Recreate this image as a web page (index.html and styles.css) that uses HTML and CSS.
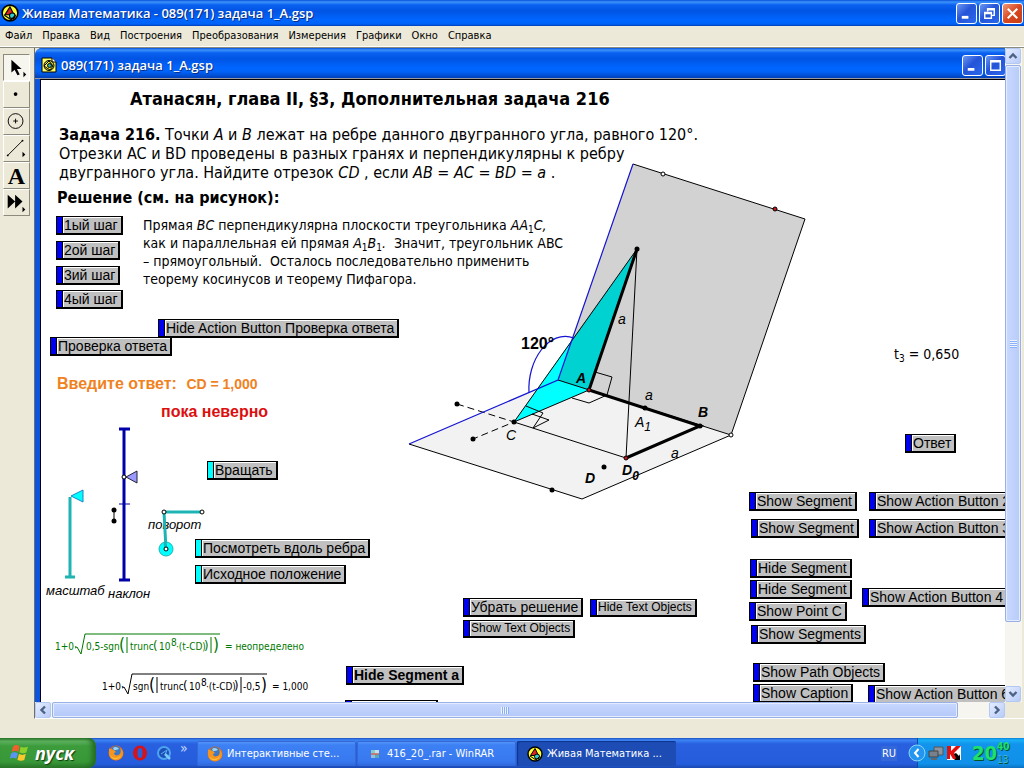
FILE: index.html
```
<!DOCTYPE html>
<html lang="ru">
<head>
    <meta charset="UTF-8">
    <title>Живая Математика - 089(171) задача 1_A.gsp</title>
    <link rel="stylesheet" href="styles.css">
</head>
<body>
<!-- общие значки -->
<svg class="defs" aria-hidden="true">
    <symbol id="logo" viewBox="0 0 16 16">
        <circle cx="8" cy="8" r="7" fill="#ff3" stroke="#000" stroke-width="1.4"/>
        <path d="M8 2.500L3.500 9.500h8z" fill="#d22" stroke="#000"/>
        <circle cx="10" cy="10.500" r="2.500" fill="#3cc" stroke="#000"/>
        <path d="M3 10l6 4 4-4" fill="none" stroke="#000"/>
    </symbol>
    <symbol id="firefox" viewBox="0 0 16 16">
        <circle cx="8" cy="8" r="7.5" fill="#e66a10"/>
        <circle cx="8" cy="6" r="5" fill="#3a78c8"/>
        <path d="M5 3c2-2 5-1 6 1L8 5 6 5z" fill="#9cd4f4"/>
        <path d="M1 2c0 2 1 2 2 2l3 1 2 2-2 1c0 3 4 3 6 1 1-2 1-4 0-6 4 3 4 8 0 11-5 3-11 0-11-6z" fill="#f5941e"/>
        <path d="M2 10c3 4 8 4 11 0-1 5-9 6-11 0z" fill="#fbc23a"/>
    </symbol>
    <symbol id="arrow" viewBox="0 0 10 10">
        <path d="M1.500 7L5 3.500 8.500 7" fill="none" stroke="#4d6185" stroke-width="2.400"/>
    </symbol>
</svg>

<div class="titlebar">
    <svg class="logo"><use href="#logo"/></svg>
    <h1>Живая Математика - 089(171) задача 1_A.gsp</h1>
    <button class="win" aria-label="Свернуть"><svg viewBox="0 0 20 20"><path d="M5 14h7" stroke="#fff" stroke-width="3"/></svg></button>
    <button class="win" aria-label="Восстановить"><svg viewBox="0 0 20 20"><path d="M8 8V5h7v7h-3M8 6h7" fill="none" stroke="#fff" stroke-width="1.500"/><path d="M5 9h7v6H5zM5 10h7" fill="none" stroke="#fff" stroke-width="1.500"/></svg></button>
    <button class="win close" aria-label="Закрыть"><svg viewBox="0 0 20 20"><path d="M5 5l10 10M15 5L5 15" stroke="#fff" stroke-width="2.200"/></svg></button>
</div>

<div class="menu">
    <button>Файл</button>
    <button>Правка</button>
    <button>Вид</button>
    <button>Построения</button>
    <button>Преобразования</button>
    <button>Измерения</button>
    <button>Графики</button>
    <button>Окно</button>
    <button>Справка</button>
</div>

<div class="work">
    <div class="tools">
        <button class="on" aria-label="Стрелка"><svg viewBox="0 0 27 27"><path d="M8 5v14l3.500-3 3 6 2.500-1-3-6h5z"/><path d="M21 18v6l3-3z"/></svg></button>
        <button aria-label="Точка"><svg viewBox="0 0 27 27"><circle cx="12.500" cy="13" r="2"/></svg></button>
        <button aria-label="Циркуль"><svg viewBox="0 0 27 27"><circle cx="12.500" cy="13" r="8" fill="none" stroke="#000"/><path d="M10 13h5M12.500 10.500v5" stroke="#000"/></svg></button>
        <button aria-label="Линейка"><svg viewBox="0 0 27 27"><path d="M4 21L20 5" stroke="#000"/><circle cx="4" cy="21" r="1"/><circle cx="20" cy="5" r="1"/><path d="M20 17v6l3-3z"/></svg></button>
        <button class="letter">A</button>
        <button aria-label="Инструменты"><svg viewBox="0 0 27 27"><path d="M4 5v15l8-7.500zM12 5v15l8-7.500z"/><path d="M20 18v6l3-3z"/></svg></button>
    </div>

    <div class="mdi">
        <div class="doc">
            <div class="dochead">
                <svg class="docicon" viewBox="0 0 16 16"><path d="M1 1h10l4 4v10H1z" fill="#ff6" stroke="#000"/><path d="M11 1v4h4" fill="#fff" stroke="#000"/><circle cx="8" cy="8.500" r="5" fill="#cc3" stroke="#000"/><path d="M3 9l5-5 4 5-3 4z" fill="#ff3" stroke="#000"/><circle cx="8.500" cy="8.500" r="2" fill="#3aa" stroke="#000"/></svg>
                <h2>089(171) задача 1_A.gsp</h2>
                <button class="win" aria-label="Свернуть"><svg viewBox="0 0 20 20"><path d="M5 14h7" stroke="#fff" stroke-width="3"/></svg></button>
                <button class="win" aria-label="Развернуть"><svg viewBox="0 0 20 20"><path d="M5 5h10v10H5zM5 6h10" fill="none" stroke="#fff" stroke-width="1.500"/></svg></button>
            </div>

            <div class="sketch">
                <!-- чертёж -->
                <svg class="figure" viewBox="41 80 964 622">
                    <path d="M558 380L731 435 582 499 409 444z" fill="#f2f2f2"/>
                    <path d="M633 164L805 219 731 435 558 380z" fill="#d2d2d2"/>
                    <path d="M572 340L514 422 589 390 558 380z" fill="#0ff"/>
                    <path d="M637 249L572 340 558 380 589 390z" fill="#00d2d2"/>
                    <g fill="none" stroke="#000">
                        <path d="M633 164L805 219 731 435 582 499 409 444M558 380L731 435"/>
                        <path d="M589 390L514 422 637 249 626 458 514 422"/>
                        <path d="M595 372l17 5-5 18-18 8-17-5"/>
                        <path d="M526 406l17 7-10 15M532 414l17 6-16 8"/>
                        <path d="M457 404l57 18-41 17" stroke-dasharray="7 4"/>
                        <path d="M637 249L589 390 700 426 626 458" stroke-width="3"/>
                    </g>
                    <g fill="none" stroke="#1414d2" stroke-width="1.200">
                        <path d="M633 164L558 380 409 444"/>
                        <path d="M529 393C527 360 549 329 574 338"/>
                    </g>
                    <circle cx="637" cy="249" r="2.500"/>
                    <circle cx="514" cy="422" r="2.500"/>
                    <circle cx="700" cy="426" r="2.500"/>
                    <circle cx="645" cy="408" r="2.500"/>
                    <circle cx="457" cy="404" r="2.500"/>
                    <circle cx="473" cy="439" r="2.500"/>
                    <circle cx="604" cy="467" r="2.500"/>
                    <circle cx="552" cy="490" r="2.500"/>
                    <g fill="#c8141e" stroke="#000">
                        <circle cx="589" cy="390" r="2"/>
                        <circle cx="626" cy="458" r="2"/>
                        <circle cx="775" cy="209" r="2"/>
                    </g>
                    <g fill="#fff" stroke="#000">
                        <circle cx="663" cy="174" r="2"/>
                        <circle cx="731" cy="435" r="2"/>
                    </g>
                    <text class="deg" x="521" y="349">120°</text>
                    <g class="vertex">
                        <text x="576" y="383">A</text>
                        <text x="698" y="417">B</text>
                        <text x="585" y="483">D</text>
                        <text x="622" y="475">D<tspan class="low" dy="5">0</tspan></text>
                    </g>
                    <g class="side">
                        <text x="618" y="324">a</text>
                        <text x="645" y="400">a</text>
                        <text x="671" y="458">a</text>
                        <text x="635" y="427">A<tspan class="low" dy="4">1</tspan></text>
                        <text x="506" y="440">C</text>
                    </g>

                    <!-- ползунки -->
                    <g class="lbl">
                        <text x="46" y="595">масштаб</text>
                        <text x="108" y="598">наклон</text>
                        <text x="148" y="529">поворот</text>
                    </g>
                    <g fill="none" stroke="#1eb4b4" stroke-width="3">
                        <path d="M70 497v80M65 577h10"/>
                        <path d="M201 512h-37l2 37"/>
                    </g>
                    <path d="M71 496l12-6v12z" fill="#0ff" stroke="#1487c8"/>
                    <path d="M124 428v152M119 429h11M119 580h11" stroke="#0000aa" stroke-width="3"/>
                    <path d="M119 504h11" stroke="#0000aa"/>
                    <path d="M126 477l11-6v12z" fill="#99f" stroke="#223"/>
                    <path d="M114 510v11" stroke="#000"/>
                    <circle cx="114" cy="510" r="2.500"/>
                    <circle cx="114" cy="521" r="2.500"/>
                    <circle cx="166" cy="549" r="7" fill="#0ff" stroke="#1eb4b4"/>
                    <path d="M165 542l1 7" stroke="#1eb4b4" stroke-width="3"/>
                    <g fill="#fff" stroke="#000">
                        <circle cx="124" cy="477" r="2"/>
                        <circle cx="164" cy="512" r="2"/>
                        <circle cx="202" cy="512" r="2"/>
                        <circle cx="166" cy="549" r="2"/>
                    </g>

                    <!-- формулы -->
                    <g class="formula" fill="#007800">
                        <path d="M75 648l2-1 4 7 4-20h135M127 637v16M211 637v16" fill="none" stroke="#007800"/>
                        <text x="55" y="650">1+0·</text>
                        <text x="86" y="650">0,5-sgn</text>
                        <text class="big" x="119" y="651">(</text>
                        <text x="130" y="650">trunc</text>
                        <text class="mid" x="153" y="650">(</text>
                        <text x="159" y="650">10</text>
                        <text x="171" y="646">8</text>
                        <text x="176" y="650">·(t-CD)</text>
                        <text class="mid" x="204" y="650">)</text>
                        <text class="big" x="213" y="651">)</text>
                        <text x="225" y="650">= неопределено</text>
                    </g>
                    <g class="formula">
                        <path d="M122 688l2-1 4 7 4-20h135M157 677v16M241 677v16" fill="none" stroke="#000"/>
                        <text x="102" y="690">1+0·</text>
                        <text x="133" y="690">sgn</text>
                        <text class="big" x="149" y="691">(</text>
                        <text x="160" y="690">trunc</text>
                        <text class="mid" x="183" y="690">(</text>
                        <text x="189" y="690">10</text>
                        <text x="201" y="686">8</text>
                        <text x="206" y="690">·(t-CD)</text>
                        <text class="mid" x="234" y="690">)</text>
                        <text x="243" y="690">-0,5</text>
                        <text class="big" x="261" y="691">)</text>
                        <text x="272" y="690">= 1,000</text>
                    </g>
                </svg>

                <h3 class="item heading">Атанасян, глава II, §3, Дополнительная задача 216</h3>
                <p class="item task"><b>Задача 216.</b> Точки <i>A</i> и <i>B</i> лежат на ребре данного двугранного угла, равного 120°.<br>
                    Отрезки AC и BD проведены в разных гранях и перпендикулярны к ребру<br>
                    двугранного угла. Найдите отрезок <i>CD</i> , если <i>AB</i> = <i>AC</i> = <i>BD</i> = <i>a</i> .</p>
                <h4 class="item solution">Решение (см. на рисунок):</h4>
                <p class="item proof">Прямая <i>BC</i> перпендикулярна плоскости треугольника <i>AA</i><sub>1</sub><i>C,</i><br>
                    как и параллельная ей прямая <i>A</i><sub>1</sub><i>B</i><sub>1</sub><i>.</i>&nbsp; Значит, треугольник ABC<br>
                    – прямоугольный.&nbsp; Осталось последовательно применить<br>
                    теорему косинусов и теорему Пифагора.</p>
                <p class="item enter">Введите ответ: <span>CD = 1,000</span></p>
                <p class="item wrong">пока неверно</p>
                <p class="item t3">t<sub>3</sub> = 0,650</p>

                <button class="item act step1">1ый шаг</button>
                <button class="item act step2">2ой шаг</button>
                <button class="item act step3">3ий шаг</button>
                <button class="item act step4">4ый шаг</button>
                <button class="item act hidecheck">Hide Action Button Проверка ответа</button>
                <button class="item act check">Проверка ответа</button>
                <button class="item act cyan rotate">Вращать</button>
                <button class="item act cyan along">Посмотреть вдоль ребра</button>
                <button class="item act cyan home">Исходное положение</button>
                <button class="item act clear">Убрать решение</button>
                <button class="item act small hidetext">Hide Text Objects</button>
                <button class="item act small showtext">Show Text Objects</button>
                <button class="item act bold hidea">Hide Segment a</button>
                <button class="item act hideb" aria-label="Hide Segment"></button>
                <button class="item act answer">Ответ</button>
                <button class="item act seg1">Show Segment</button>
                <button class="item act seg2">Show Segment</button>
                <button class="item act seg3">Hide Segment</button>
                <button class="item act seg4">Hide Segment</button>
                <button class="item act pointc">Show Point C</button>
                <button class="item act segs">Show Segments</button>
                <button class="item act paths">Show Path Objects</button>
                <button class="item act caption">Show Caption</button>
                <button class="item act ab2">Show Action Button 2</button>
                <button class="item act ab3">Show Action Button 3</button>
                <button class="item act ab4">Show Action Button 4</button>
                <button class="item act ab6">Show Action Button 6</button>
            </div>
        </div>

        <div class="vscroll">
            <button class="sb" aria-label="Вверх"><svg><use href="#arrow"/></svg></button>
            <div class="thumb"><span class="grip"></span></div>
            <div class="rest"></div>
            <button class="sb down" aria-label="Вниз"><svg><use href="#arrow"/></svg></button>
        </div>
        <div class="hscroll">
            <button class="sb left" aria-label="Влево"><svg><use href="#arrow"/></svg></button>
            <div class="thumb"><span class="grip"></span></div>
            <div class="rest"></div>
            <button class="sb right" aria-label="Вправо"><svg><use href="#arrow"/></svg></button>
        </div>
    </div>
</div>

<div class="status"></div>

<div class="taskbar">
    <button class="start">
        <svg viewBox="0 0 18 18"><path d="M3 3c2-1.500 4-1.500 6 0L8 8.500c-2-1.500-4-1.500-6.500 0z" fill="#f0602c"/><path d="M10 3.500c2 1 4 1 7 0L15.500 9c-2 1-4 1-6.500 0z" fill="#8cd02c"/><path d="M1 10c2-1.500 4-1.500 6.500 0L6 15c-2-1.500-4-1.500-6 0z" fill="#5a94f4"/><path d="M8.500 10.500c2 1 4 1 6.500 0L13.500 16c-2 1-4 1-6.500 0z" fill="#fcc82c"/></svg>
        пуск
    </button>
    <div class="quick">
        <button aria-label="Firefox"><svg><use href="#firefox"/></svg></button>
        <button aria-label="Opera"><svg viewBox="0 0 16 16"><ellipse cx="8" cy="8" rx="7" ry="7.500" fill="#d4141c"/><ellipse cx="8" cy="8" rx="2.500" ry="5" fill="#2860dc"/></svg></button>
        <button aria-label="QuickTime"><svg viewBox="0 0 16 16"><circle cx="8" cy="8" r="6" fill="#1c50b8" stroke="#4ca4f0" stroke-width="2"/><path d="M5 9l6-4-2 5" fill="none" stroke="#5cb0f4"/><path d="M9 9l5 5" stroke="#7cc8f8" stroke-width="2.500"/></svg></button>
        <button class="more">»</button>
    </div>
    <div class="tasks">
        <button><svg><use href="#firefox"/></svg>Интерактивные сте...</button>
        <button><svg viewBox="0 0 16 16"><path d="M4 4h4v4H4z" fill="#8cc"/><path d="M8 4h4v4H8z" fill="#cde"/><path d="M4 8h4v4H4z" fill="#9bd"/><path d="M8 8h4v4H8z" fill="#5ab"/><path d="M4 8h8" stroke="#c65" stroke-width="1.500"/></svg>416_20_.rar - WinRAR</button>
        <button class="on"><svg><use href="#logo"/></svg>Живая Математика ...</button>
    </div>
    <span class="lang">RU</span>
    <div class="tray">
        <button class="expand" aria-label="Показать значки"><svg viewBox="0 0 18 18"><circle cx="9" cy="9" r="8" fill="#2496f0" stroke="#8cd4fc"/><path d="M10.500 5L7 9l3.500 4" fill="none" stroke="#fff" stroke-width="2"/></svg></button>
        <svg class="net" viewBox="0 0 16 16"><path d="M6 2h9v8H6z" fill="#8c94a0" stroke="#555"/><path d="M1 6h9v6H1z" fill="#78808c" stroke="#444"/><path d="M3 14h6" stroke="#666" stroke-width="2"/></svg>
        <svg class="kav" viewBox="0 0 16 16"><path d="M1 1h14v14H1z" fill="#fff"/><path d="M1 1h4v5l5-5h5L8 8l4 6H7L4 9v5H1z" fill="#e01010"/><path d="M8 9l2-1 3 3 1-2v6H8l2-2z"/></svg>
        <div class="clock"><span>20</span><span class="min"><b>40</b><b>13</b></span></div>
    </div>
</div>
</body>
</html>
```
FILE: styles.css
```
*{box-sizing:border-box;}
body{
    display:flex;
    flex-direction:column;
    height:100vh;
    margin:0;
    overflow:hidden;
    background-color:#ece9d8;
    color:#000;
    font-family:"DejaVu Sans Condensed","DejaVu Sans",sans-serif;
    font-size:11px;
}
h1,h2,h3,h4,p{margin:0;}
button{
    padding:0;
    border:0;
    background:none;
    color:inherit;
    font:inherit;
}
svg{display:block;flex:none;}
.defs{position:absolute;width:0;height:0;}

/*заголовки окон*/
.titlebar,.dochead{
    display:flex;
    align-items:center;
    gap:2px;
    background:linear-gradient(#0a50d8 0,#3c94fc 2px,#0a60f0 5px,#0054e4 11px,#0066ff 20px,#0062f6 24px,#0040b8 100%);
    color:#fff;
}
.titlebar{height:26px;padding:0 1px;}
.titlebar .logo{width:18px;height:18px;}
h1,h2{
    flex:1;
    padding-left:1px;
    font-family:"Open Sans","Noto Sans",sans-serif;
    font-size:13px;
    font-weight:600;
    line-height:20px;
    text-shadow:1px 1px 0 #0c2c80;
    white-space:nowrap;
}
.win{
    width:21px;
    height:21px;
    border:1px solid #fff;
    border-radius:3px;
    background:linear-gradient(135deg,#6c98f4,#2454d8 45%,#2c68ec);
}
.close{background:linear-gradient(135deg,#f09878,#d84820 50%,#c83c14);}

/*меню*/
.menu{
    display:flex;
    gap:10px;
    height:21px;
    padding:0 5px 2px;
    border-bottom:1px solid #fff;
}

/*рабочая область*/
.work{
    display:flex;
    flex:1;
    min-height:0;
    border-top:1px solid #8c8a7c;
}
.tools{
    width:34px;
    padding:6px 4px 0 3px;
}
.tools button{
    display:block;
    width:27px;
    height:27px;
    border:1px solid;
    border-color:#fff #8c8a7c #8c8a7c #fff;
}
.tools svg{width:25px;height:25px;}
.tools .on{border-color:#8c8a7c #fff #fff #8c8a7c;background-color:#f6f5ee;}
.tools .letter{
    font-family:"Liberation Serif",serif;
    font-size:24px;
    font-weight:bold;
    line-height:24px;
}
.mdi{
    display:grid;
    grid-template:1fr 16px / 1fr 17px;
    flex:1;
    min-width:0;
    padding-right:2px;
    border-left:1px solid #716f64;
    border-bottom:1px solid #fff;
    background-color:#ece9d8;
}
.doc{
    display:flex;
    flex-direction:column;
    min-width:0;
    min-height:0;
    overflow:hidden;
    padding-left:5px;
    border-top-left-radius:7px;
    background-color:#0a54e0;
}
.dochead{
    height:31px;
    flex:none;
    padding:4px 0 0 2px;
    margin-left:-5px;
    border-bottom:1px solid #9a98a0;
    overflow:hidden;
}
.dochead .docicon{width:16px;height:16px;margin:0 1px 0 4px;}
.dochead .win:last-child{margin-right:-1px;}

/*чертёж: свободное поле*/
.sketch{
    position:relative;
    flex:1;
    overflow:hidden;
    border-top:1px solid #000;
    border-left:1px solid #000;
    background-color:#fff;
}
.figure{position:absolute;left:0;top:0;width:964px;height:622px;}
.item{position:absolute;white-space:nowrap;}
.deg{font:bold 16px "Liberation Sans",Arial,sans-serif;}
.vertex{font:italic bold 14px "Liberation Sans",Arial,sans-serif;}
.side{font:italic 14px "Liberation Sans",Arial,sans-serif;}
.low{font-size:12px;}
.lbl{font:italic 13px "Liberation Sans",Arial,sans-serif;}
.formula{font-size:10px;}
.formula .mid{font-size:13px;}
.formula .big{font-size:17px;}

.heading{left:89px;top:8px;font-size:18px;line-height:22px;}
.task{left:18px;top:45px;font-size:16px;line-height:19px;}
.solution{left:16px;top:108px;font-size:16px;line-height:20px;}
.proof{left:102px;top:136px;font-size:14px;line-height:18px;}
sub{font-size:10px;line-height:0;vertical-align:-3px;}
.enter,.wrong{
    font-family:"Liberation Sans",Arial,sans-serif;
    font-weight:bold;
    line-height:20px;
}
.enter{left:16px;top:294px;color:#f0821e;font-size:16px;}
.enter span{margin-left:5px;font-size:14px;}
.wrong{left:120px;top:322px;color:#dc0f0f;font-size:16px;}
.t3{left:853px;top:265px;font-size:14px;line-height:18px;}

/*кнопки на чертеже*/
.act{
    height:19px;
    padding:0 3px 0 7px;
    border:1px solid #000;
    border-width:1px 2px 2px 1px;
    background:linear-gradient(90deg,#0000f0 5px,#000 5px 6px,#fff 6px 7px,transparent 7px),linear-gradient(#fff 1px,#c0c0c0 1px);
    font:14px/15px "Liberation Sans",Arial,sans-serif;
}
.cyan{background:linear-gradient(90deg,#0ff 5px,#000 5px 6px,#fff 6px 7px,transparent 7px),linear-gradient(#fff 1px,#c0c0c0 1px);}
.small{height:18px;font-size:12px;}
.bold{font-weight:bold;}
.step1{left:15px;top:136px;}
.step2{left:15px;top:161px;}
.step3{left:15px;top:186px;}
.step4{left:15px;top:210px;}
.hidecheck{left:117px;top:239px;}
.check{left:9px;top:257px;}
.rotate{left:166px;top:381px;}
.along{left:154px;top:459px;}
.home{left:154px;top:485px;}
.clear{left:422px;top:518px;}
.hidetext{left:549px;top:519px;}
.showtext{left:422px;top:540px;}
.hidea{left:305px;top:586px;}
.hideb{left:304px;top:620px;width:93px;}
.answer{left:864px;top:354px;}
.seg1{left:708px;top:412px;}
.seg2{left:710px;top:439px;}
.seg3{left:709px;top:479px;}
.seg4{left:709px;top:500px;}
.pointc{left:708px;top:522px;}
.segs{left:710px;top:545px;}
.paths{left:712px;top:583px;}
.caption{left:712px;top:604px;}
.ab2{left:828px;top:412px;}
.ab3{left:828px;top:439px;}
.ab4{left:821px;top:508px;}
.ab6{left:827px;top:605px;}

/*полосы прокрутки*/
.vscroll,.hscroll{display:flex;background-color:#f6f5f0;}
.vscroll{flex-direction:column;}
.sb{
    display:flex;
    align-items:center;
    justify-content:center;
    flex:none;
    width:16px;
    height:16px;
    border:1px solid #b4c8f4;
    border-radius:2px;
    background:linear-gradient(135deg,#e4ecff,#b8ccf8);
}
.sb svg{width:10px;height:10px;}
.down svg{transform:rotate(180deg);}
.left svg{transform:rotate(-90deg);}
.right svg{transform:rotate(90deg);}
.thumb{
    display:flex;
    align-items:center;
    justify-content:center;
    border:1px solid #98b0e4;
    border-radius:2px;
    box-shadow:inset 0 0 0 1px #e4ecff;
}
.vscroll .thumb{flex:558;width:16px;margin-top:1px;background:linear-gradient(90deg,#c8d8ff,#b8ccf8);}
.vscroll .rest{flex:64;}
.hscroll .thumb{flex:906;margin-left:1px;background:linear-gradient(#c8d8ff,#b4c8f8);}
.hscroll .rest{flex:31;}
.vscroll .grip{width:7px;height:8px;background:repeating-linear-gradient(#eef4ff 0 1px,#8cb0f8 1px 2px);}
.hscroll .grip{width:8px;height:7px;background:repeating-linear-gradient(90deg,#eef4ff 0 1px,#8cb0f8 1px 2px);}

.status{height:19px;}

/*панель задач*/
.taskbar{
    display:flex;
    height:30px;
    background:linear-gradient(#1c50c0 0,#3c84f4 2px,#2860e0 6px,#245cdc 26px,#1a48b0 100%);
    color:#fff;
    font-size:11px;
}
.start{
    display:flex;
    align-items:center;
    gap:6px;
    width:96px;
    padding:0 0 1px 10px;
    border-radius:0 8px 8px 0;
    background:linear-gradient(#2c7c2c 0,#62b462 3px,#3c9c3c 8px,#389838 24px,#2a7a2a 100%);
    box-shadow:inset -4px 0 5px #246c24;
    font:italic bold 18px "Open Sans","Noto Sans",sans-serif;
    text-shadow:1px 1px 1px #123c12;
}
.start svg{width:19px;height:19px;}
.quick{
    display:flex;
    align-items:center;
    gap:8px;
    width:101px;
    padding-left:12px;
}
.quick svg{width:16px;height:16px;}
.quick .more{margin-top:-10px;font-size:14px;color:#c8dcff;}
.tasks{display:flex;flex:1;gap:1px;padding:3px 0 2px;}
.tasks button{
    display:flex;
    align-items:center;
    gap:4px;
    flex:0 1 159px;
    min-width:0;
    padding-left:10px;
    border-radius:2px;
    background:linear-gradient(#5c9cfc,#3c80f4 4px,#3878f0 20px,#2c68dc);
    box-shadow:inset 0 0 0 1px #3468d4;
    white-space:nowrap;
}
.tasks .on{background:#1c4cb4;box-shadow:inset 1px 1px 1px #103488;}
.tasks svg{width:16px;height:16px;}
.lang{
    align-self:center;
    padding:1px;
    margin-right:20px;
    background-color:#3468d8;
}
.tray{
    display:flex;
    align-items:center;
    gap:2px;
    width:107px;
    border-left:1px solid #0c4ca8;
    background:linear-gradient(#0c80d8 0,#18b0f8 2px,#1294ec 6px,#1090e8 26px,#0c70c0 100%);
}
.expand{margin-left:-10px;}
.expand svg{width:18px;height:18px;}
.net,.kav{width:16px;height:16px;}
.clock{
    display:flex;
    align-items:center;
    margin-left:8px;
    color:#1ee06e;
    font-size:20px;
    font-weight:bold;
    text-shadow:1px 1px 0 #065028;
}
.min{display:flex;flex-direction:column;font-size:10px;line-height:13px;}
.min b:last-child{color:#3cb4dc;font-weight:normal;}
```
